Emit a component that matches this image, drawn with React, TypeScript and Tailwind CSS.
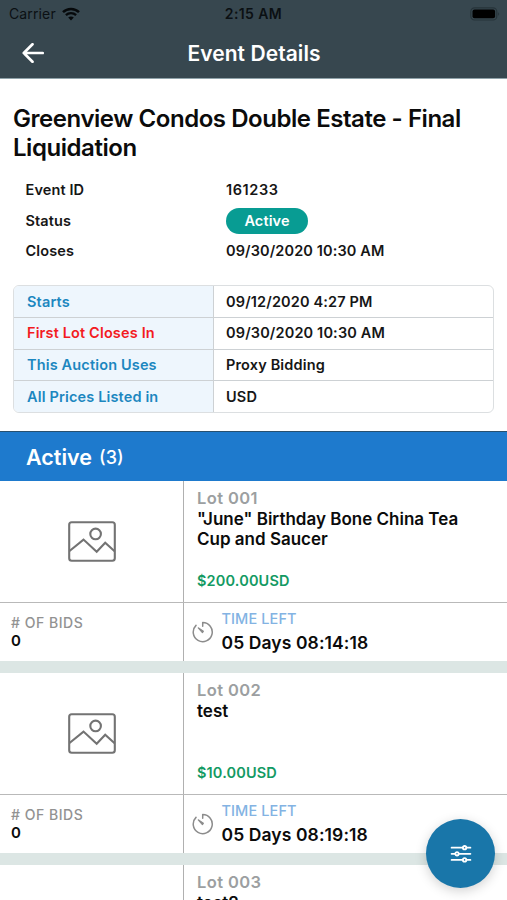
import type { ReactNode } from "react";

type Lot = { id: string; title: string; price: string; bids: number; timeLeft: string };

const lots: Lot[] = [
  { id: "Lot 001", title: '"June" Birthday Bone China Tea Cup and Saucer', price: "$200.00USD", bids: 0, timeLeft: "05 Days 08:14:18" },
  { id: "Lot 002", title: "test", price: "$10.00USD", bids: 0, timeLeft: "05 Days 08:19:18" },
];

const terms = [
  { label: "Starts", value: "09/12/2020 4:27 PM", color: "text-[#1c87c0]" },
  { label: "First Lot Closes In", value: "09/30/2020 10:30 AM", color: "text-[#f31b1f]" },
  { label: "This Auction Uses", value: "Proxy Bidding", color: "text-[#1c87c0]" },
  { label: "All Prices Listed in", value: "USD", color: "text-[#1c87c0]" },
];

function WifiIcon() {
  return (
    <svg width="18" height="14" viewBox="0 0 18 14" fill="none" stroke="#06090b">
      <path d="M1 5.2C5.4.9 12.600.9 17 5.2" strokeWidth="2.500" />
      <path d="M3.900 8.200c2.800-2.700 7.400-2.700 10.200 0" strokeWidth="2.300" />
      <path d="M9 13.400 6.200 10.500c1.500-1.400 4.100-1.400 5.600 0z" fill="#06090b" stroke="none" />
    </svg>
  );
}

function BatteryIcon() {
  return (
    <svg width="30" height="14" viewBox="0 0 30 14" fill="none">
      <rect x="0.800" y="0.800" width="26" height="12.200" rx="3.800" stroke="#27343a" strokeWidth="1.200" />
      <rect x="2.500" y="2.500" width="22.600" height="8.800" rx="2" fill="#000" />
      <path d="M28.200 5.200c1.300.5 1.300 3 0 3.500z" fill="#27343a" />
    </svg>
  );
}

function BackIcon() {
  return (
    <svg width="22" height="20" viewBox="0 0 22 20" fill="none" stroke="#fff" strokeWidth="2.700" strokeLinecap="round" strokeLinejoin="round">
      <path d="M20.700 10H1.800M10.500 1.300 1.800 10l8.700 8.700" />
    </svg>
  );
}

function PictureIcon() {
  return (
    <svg width="48" height="41" viewBox="0 0 48 41" fill="none" stroke="#737373" strokeWidth="2.100">
      <rect x="1.200" y="1.200" width="45.600" height="38.600" rx="2.500" />
      <circle cx="27.600" cy="12.900" r="5.300" />
      <path d="M1.500 30 15.500 18.600 28.700 30.700 37.200 21.800 46.600 30.300" />
    </svg>
  );
}

function TimerIcon() {
  return (
    <svg width="22" height="22" viewBox="0 0 22 22" fill="none" stroke="#8c8c8c" strokeWidth="1.500" strokeLinecap="round" strokeLinejoin="round">
      <path d="M10.700 5.300V1.600A9.500 9.500 0 1 1 4 4.400" />
      <path d="M6.200 6.800 11.400 10.300 10.400 11.600z" fill="#8c8c8c" strokeWidth="1.100" />
    </svg>
  );
}

function FilterIcon() {
  return (
    <svg width="22" height="18" viewBox="0 0 22 18" fill="none" stroke="#fff" strokeWidth="1.800" strokeLinecap="round">
      <path d="M1.600 2.700H12.600M16.600 2.700H20.400M1.600 8.800H5M9 8.800H20.400M1.600 14.900H12.600M16.600 14.900H20.400" />
      <circle cx="14.600" cy="2.700" r="1.700" />
      <circle cx="7" cy="8.800" r="1.700" />
      <circle cx="14.600" cy="14.900" r="1.700" />
    </svg>
  );
}

function SummaryRow({ label, children }: { label: string; children: ReactNode }) {
  return (
    <div className="flex h-[30.500px] items-center text-[14.500px] font-semibold tracking-[0.120px]">
      <span className="w-[200.500px] shrink-0">{label}</span>
      {children}
    </div>
  );
}

function LotHeading({ id, title }: { id: string; title: string }) {
  return (
    <>
      <span className="text-[16.500px] leading-[20px] font-semibold tracking-[0.400px] text-[#9c9fa1]">{id}</span>
      <h3 className="h-[64px] w-[280px] pt-[2px] text-[17px] leading-[19.500px] font-semibold text-[#0b0b0b]">{title}</h3>
    </>
  );
}

function LotCard({ lot }: { lot: Lot }) {
  return (
    <article className="shrink-0 border-b-[12px] border-[#dce6e4]">
      <div className="flex h-[122px] border-b-[1.500px] border-[#b9b9b9]">
        <div className="flex w-[184px] shrink-0 items-center justify-center border-r border-[#b0b0b0]">
          <PictureIcon />
        </div>
        <div className="flex flex-col pl-[13px] pt-[7px]">
          <LotHeading id={lot.id} title={lot.title} />
          <span className="text-[14.500px] leading-[18px] font-semibold tracking-[0.150px] text-[#139a63]">{lot.price}</span>
        </div>
      </div>
      <div className="flex h-[58px]">
        <div className="flex w-[184px] shrink-0 flex-col border-r border-[#b0b0b0] pl-[11px] pt-[11px]">
          <span className="text-[14px] leading-[18px] font-medium tracking-[0.520px] text-[#929292]"># OF BIDS</span>
          <span className="text-[15px] leading-[18px] font-semibold text-[#0b0b0b]">{lot.bids}</span>
        </div>
        <div className="flex pl-2">
          <div className="pt-[18px]">
            <TimerIcon />
          </div>
          <div className="flex flex-col pl-[7.500px] pt-[6px]">
            <span className="text-[14.500px] leading-[19px] font-medium tracking-[0.100px] text-[#83b3e3]">TIME LEFT</span>
            <span className="pt-[4px] text-[17.500px] leading-[22px] font-semibold tracking-[0.100px] text-[#0b0b0b]">{lot.timeLeft}</span>
          </div>
        </div>
      </div>
    </article>
  );
}

export default function App() {
  return (
    <div className="relative flex h-[900px] w-[507px] flex-col overflow-hidden bg-white font-[Inter,sans-serif] text-[#161616]">
      <header className="h-[79px] shrink-0 border-b border-[#8fa2a9] bg-[#37474f]">
        <div className="grid h-[27px] grid-cols-3 items-center px-[7px] text-[#0b1013]">
          <div className="flex items-center gap-[6px] pl-[2px] text-[14px] tracking-[0.130px]">
            <span>Carrier</span>
            <WifiIcon />
          </div>
          <span className="text-center text-[14px] font-semibold tracking-[0.400px]">2:15 AM</span>
          <div className="flex justify-end">
            <BatteryIcon />
          </div>
        </div>
        <div className="grid h-[51px] grid-cols-[100px_1fr_100px] items-center">
          <div className="pl-[22px]">
            <BackIcon />
          </div>
          <h1 className="pl-px pt-[2px] text-center text-[21px] font-semibold tracking-[0.060px] text-white">Event Details</h1>
        </div>
      </header>

      <h2 className="shrink-0 pl-[13px] pr-5 pt-[24.500px] text-[24px] leading-[29.500px] font-semibold tracking-[-0.450px] text-[#0b0b0b]">
        Greenview Condos Double Estate - Final Liquidation
      </h2>

      <section className="shrink-0 pl-[25.500px] pt-[12.500px]">
        <SummaryRow label="Event ID">
          <span className="tracking-[0.600px]">161233</span>
        </SummaryRow>
        <SummaryRow label="Status">
          <span className="flex h-[26px] w-[82px] items-center justify-center rounded-full bg-[#089c93] text-white">Active</span>
        </SummaryRow>
        <SummaryRow label="Closes">09/30/2020 10:30 AM</SummaryRow>
      </section>

      <section className="mx-[13px] mt-[18.500px] h-[128px] shrink-0 overflow-hidden rounded-[6px] border border-[#dcdfe1] text-[14.500px] font-semibold tracking-[0.150px]">
        {terms.map((term) => (
          <div key={term.label} className="flex h-[31.750px] border-b border-[#cdd1d4] last:border-b-0">
            <div className={`flex w-[200px] items-center border-r border-[#cdd1d4] bg-[#eef6fd] pl-[13px] ${term.color}`}>{term.label}</div>
            <div className="flex items-center pl-3">{term.value}</div>
          </div>
        ))}
      </section>

      <div className="mt-[18px] flex h-[50px] shrink-0 items-center border-t border-[#27506f] bg-[#1e7acd] pl-[26px] pt-px text-white">
        <span className="text-[21.500px] font-semibold">Active</span>
        <span className="pl-[7px] pt-px text-[18px] font-medium">(3)</span>
      </div>

      {lots.map((lot) => (
        <LotCard key={lot.id} lot={lot} />
      ))}

      <article className="flex h-[35px] shrink-0 overflow-hidden">
        <div className="w-[184px] shrink-0 border-r border-[#b0b0b0]" />
        <div className="flex flex-col pl-[13px] pt-[7px]">
          <LotHeading id="Lot 003" title="test2" />
        </div>
      </article>

      <button className="absolute left-[426px] top-[819px] flex size-[69px] items-center justify-center rounded-full bg-[#1976a9] shadow-[0_3px_12px_rgba(0,0,0,0.180)]">
        <FilterIcon />
      </button>
    </div>
  );
}
